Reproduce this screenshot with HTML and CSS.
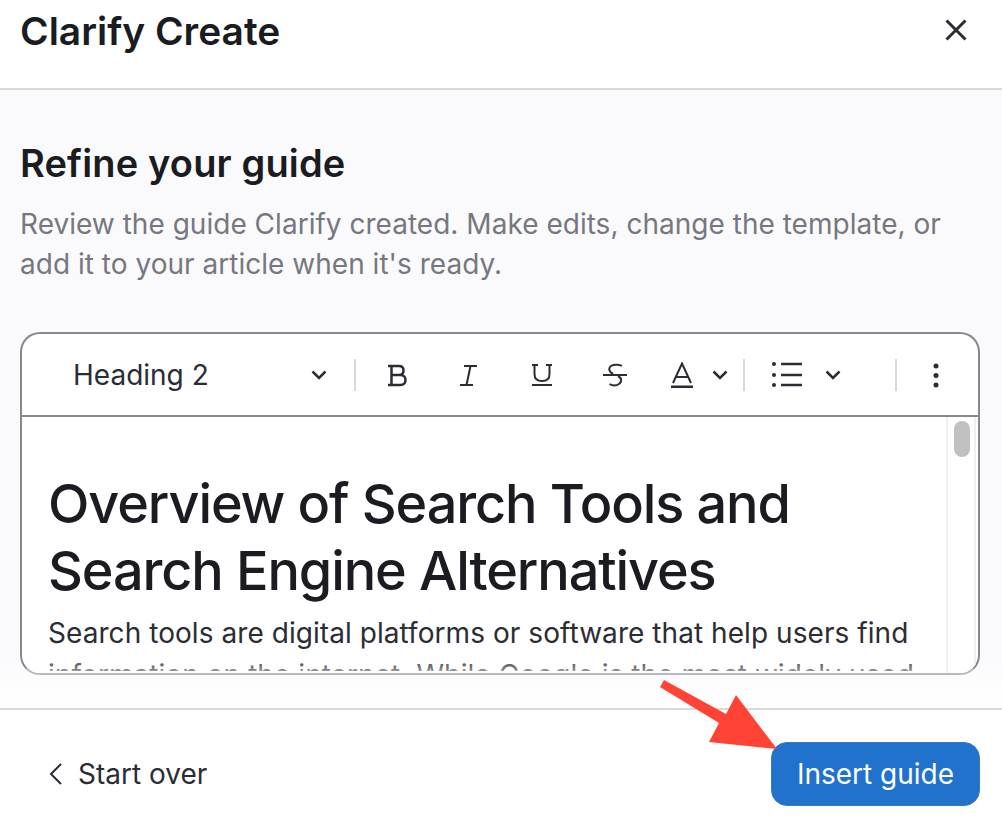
FILE: index.html
```html
<!DOCTYPE html>
<html lang="en">
<head>
<meta charset="utf-8">
<title>Clarify Create</title>
<link rel="stylesheet" href="styles.css">
</head>
<body>
<div class="modal">
  <header class="modal-header">
    <h1 class="modal-title">Clarify Create</h1>
    <button class="icon-btn close-btn" aria-label="Close">
      <svg width="24" height="24" viewBox="0 0 24 24"><path d="M2.5 2.5 21.5 21.5M21.5 2.5 2.5 21.5" class="stroke s3"/></svg>
    </button>
  </header>
  <main class="modal-body">
    <h2 class="section-title">Refine your guide</h2>
    <p class="section-desc">Review the guide Clarify created. Make edits, change the template, or add it to your article when it's ready.</p>
    <section class="editor">
      <div class="toolbar">
        <div class="format-select">
          <span>Heading 2</span>
          <svg class="chev" width="16" height="10" viewBox="0 0 16 10"><path d="M1.500 1.500 8 8 14.500 1.500" class="stroke s25"/></svg>
        </div>
        <span class="divider"></span>
        <div class="tools">
          <svg class="tool" width="24" height="24" viewBox="0 0 24 24"><path d="M3 3H14C17 3 18.500 5 18.500 7.500 18.500 10 17 12 14 12H6.500M6.500 3V22M6.500 12H15.500C18.500 12 20.500 14 20.500 17 20.500 20 18.500 22 15.500 22H3" class="stroke s25"/></svg>
          <svg class="tool tool-i" width="24" height="24" viewBox="0 0 24 24"><path d="M9 3H22M5 22H18M15.500 3 11.500 22" class="stroke s2"/></svg>
          <svg class="tool tool-u" width="24" height="24" viewBox="0 0 24 24"><path d="M2 2H8M16 2H22M4.500 2V11C4.500 15.500 7.500 18 12 18 16.500 18 19.500 15.500 19.500 11V2M2 22H22" class="stroke s2"/></svg>
          <svg class="tool tool-s" width="26" height="24" viewBox="0 0 26 24"><path d="M20 3C18 1.500 12 1 9 3 6 5 7 9 11 11M1 12H25M16 13C20 15 20 19 17 21 14 23 10 22.500 7.500 21" class="stroke s2"/></svg>
          <div class="tool-group tool-a">
            <svg width="24" height="26" viewBox="0 0 24 26"><path d="M3 21 12 1.500 21 21M6 15H18" class="stroke s2"/><path d="M1 24.700H23" class="stroke s25"/></svg>
            <svg class="chev" width="16" height="10" viewBox="0 0 16 10"><path d="M1.500 1.500 8 8 14.500 1.500" class="stroke s25"/></svg>
          </div>
        </div>
        <span class="divider"></span>
        <div class="tool-group list-group">
          <svg width="30" height="26" viewBox="0 0 30 26"><path d="M9 2H30M9 13H30M9 23H30" class="stroke s25"/><circle cx="2" cy="2" r="2" class="dot"/><circle cx="2" cy="13" r="2" class="dot"/><circle cx="2" cy="23" r="2" class="dot"/></svg>
          <svg class="chev" width="16" height="10" viewBox="0 0 16 10"><path d="M1.500 1.500 8 8 14.500 1.500" class="stroke s25"/></svg>
        </div>
        <span class="divider"></span>
        <svg class="more" width="8" height="26" viewBox="0 0 8 26"><circle cx="4" cy="4" r="2.500" class="dot"/><circle cx="4" cy="13.500" r="2.500" class="dot"/><circle cx="4" cy="23" r="2.500" class="dot"/></svg>
      </div>
      <div class="editor-content">
        <div class="doc">
          <h2 class="doc-title">Overview of Search Tools and Search Engine Alternatives</h2>
          <p class="doc-text">Search tools are digital platforms or software that help users find information on the internet. While Google is the most widely used</p>
        </div>
        <div class="scrollbar"><span class="scroll-thumb"></span></div>
        <div class="fade"></div>
      </div>
    </section>
  </main>
  <footer class="modal-footer">
    <button class="back-btn">
      <svg width="14" height="22" viewBox="0 0 14 22"><path d="M13 1 3 11 13 21" class="stroke s2"/></svg>
      <span>Start over</span>
    </button>
    <button class="primary-btn">Insert guide</button>
  </footer>
  <svg class="annotation" width="1002" height="828" viewBox="0 0 1002 828" aria-hidden="true">
    <path class="arrow" d="M664 680 726 714 736 695 777 749 709 742 719 723 660 687Z"/>
  </svg>
</div>
</body>
</html>
```
FILE: styles.css
```css
* { box-sizing: border-box; }
html, body { margin: 0; padding: 0; }
body {
  width: 1002px;
  height: 828px;
  overflow: hidden;
  background: #fff;
  font-family: Inter, "Liberation Sans", sans-serif;
  color: #1f1f26;
}
.modal {
  position: relative;
  display: flex;
  flex-direction: column;
  width: 1002px;
  height: 828px;
}
.stroke { fill: none; stroke: #2c2c35; }
.s2 { stroke-width: 2; }
.s25 { stroke-width: 2.5; }
.s3 { stroke-width: 3; }
.dot { fill: #2c2c35; }
button { font-family: inherit; background: none; border: 0; padding: 0; cursor: pointer; }

.modal-header {
  height: 90px;
  flex: none;
  display: flex;
  justify-content: space-between;
  padding: 0 34px 0 20px;
  border-bottom: 2px solid #d9d9dc;
}
.modal-title {
  margin: 6px 0 0;
  font-size: 38.9px;
  line-height: 50px;
  font-weight: 600;
  color: #1b1b22;
}
.close-btn { height: 24px; margin-top: 18px; display: block; }

.modal-body {
  flex: none;
  height: 618px;
  padding: 49px 22px 0 20px;
  background: linear-gradient(#fafafd 0, #fafafd 560px, #fff 618px);
}
.section-title {
  margin: 0;
  font-size: 38px;
  line-height: 48px;
  font-weight: 600;
  letter-spacing: 0.15px;
  color: #1b1b22;
}
.section-desc {
  margin: 17px 0 0;
  font-size: 28px;
  line-height: 40px;
  letter-spacing: 0.02px;
  color: #77777f;
  width: 950px;
}
.editor {
  margin-top: 48px;
  height: 343px;
  background: #fff;
  border: 2px solid #87878c;
  border-bottom-color: #b9b9bd;
  border-radius: 20px;
  overflow: hidden;
  display: flex;
  flex-direction: column;
}
.toolbar {
  height: 83px;
  flex: none;
  display: flex;
  align-items: center;
  border-bottom: 2px solid #87878c;
  padding-left: 51px;
}
.format-select {
  width: 254px;
  display: flex;
  justify-content: space-between;
  align-items: center;
  font-size: 28px;
  color: #2c2c35;
  flex: none;
}
.divider { width: 2px; height: 32px; background: #d9d9dc; flex: none; }
.format-select + .divider { margin-left: 27px; }
.tools { display: flex; align-items: center; margin-left: 29px; width: 358px; flex: none; }
.tool { flex: none; }
.tool-i { margin-left: 46px; }
.tool-u { margin-left: 51px; }
.tool-s { margin-left: 48px; }
.tool-a { margin-left: 42px; }
.tool-group { display: flex; align-items: center; gap: 18px; flex: none; }
.list-group { margin-left: 27px; gap: 23px; width: 123px; }
.more { margin-left: 35px; }

.editor-content { flex: 1; display: flex; min-height: 0; position: relative; }
.doc { flex: 1; padding: 53px 26px 0 26px; min-width: 0; }
.doc-title {
  margin: 0;
  font-size: 54px;
  line-height: 67px;
  font-weight: 500;
  letter-spacing: -1.1px;
  color: #1b1b22;
}
.doc-text { margin: 8px 0 0; font-size: 28px; line-height: 42px; letter-spacing: 0.06px; color: #2c2c35; }
.scrollbar {
  flex: none;
  width: 30px;
  margin-right: 2px;
  padding: 4px 6px 0;
  background: #fff;
  border-left: 2px solid #f0f0f0;
  border-right: 2px solid #f0f0f0;
}
.scroll-thumb { display: block; width: 16px; height: 36px; border-radius: 8px; background: #c1c1c1; }
.fade {
  position: absolute;
  left: 0;
  right: 32px;
  bottom: 0;
  height: 14px;
  background: linear-gradient(rgba(255,255,255,0.1), rgba(255,255,255,0.45) 82%, #fff 84%);
}

.modal-footer {
  flex: 1;
  display: flex;
  align-items: center;
  justify-content: space-between;
  padding: 10px 22px 0 48px;
  border-top: 2px solid #d9d9dc;
}
.back-btn { display: flex; align-items: center; gap: 16px; font-size: 28px; color: #2c2c35; }
.primary-btn {
  width: 209px;
  height: 64px;
  border-radius: 16px;
  background: #2172cc;
  border: 1px solid #3a78c0;
  color: #fff;
  font-size: 28px;
}
.annotation { position: absolute; left: 0; top: 0; pointer-events: none; }
.arrow { fill: #ff4436; }
```
